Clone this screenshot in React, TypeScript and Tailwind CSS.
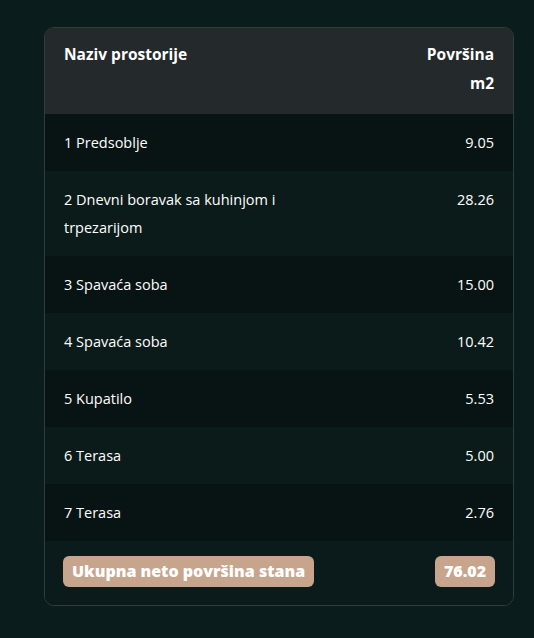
const rooms = [
  { name: '1 Predsoblje', area: '9.05' },
  { name: '2 Dnevni boravak sa kuhinjom i trpezarijom', area: '28.26' },
  { name: '3 Spavaća soba', area: '15.00' },
  { name: '4 Spavaća soba', area: '10.42' },
  { name: '5 Kupatilo', area: '5.53' },
  { name: '6 Terasa', area: '5.00' },
  { name: '7 Terasa', area: '2.76' },
];

export default function App() {
  return (
    <div className="min-h-[638px] w-full bg-[#0b1c1c] pt-[27px] font-['Open_Sans',sans-serif] text-white">
      <div className="mx-[44px] w-[470px] overflow-hidden rounded-[10px] border border-[#2f3d3c]">
        <div className="flex justify-between bg-[#24292b] px-[19px] pt-[12px] pb-[16px] text-[15.5px] font-bold leading-[29px]">
          <div>Naziv prostorije</div>
          <div className="text-right">
            Površina
            <br />
            m2
          </div>
        </div>

        {rooms.map((r, i) => (
          <div
            key={i}
            className={`flex justify-between px-[19px] py-[14.5px] text-[14.5px] font-medium leading-[28px] ${
              i % 2 === 0 ? 'bg-[#081313]' : 'bg-[#0b1b1a]'
            }`}
          >
            <div className="w-[250px]">{r.name}</div>
            <div className="text-right">{r.area}</div>
          </div>
        ))}

        <div className="flex items-start justify-between bg-[#0b1a1a] px-[18px] pt-[15px] pb-[18px]">
          <span className="rounded-[6px] bg-[#c7a48c] px-[9px] text-[16px] font-extrabold leading-[31px]">
            Ukupna neto površina stana
          </span>
          <span className="rounded-[6px] bg-[#c7a48c] px-[9px] text-[16px] font-extrabold leading-[31px]">
            76.02
          </span>
        </div>
      </div>
    </div>
  );
}
